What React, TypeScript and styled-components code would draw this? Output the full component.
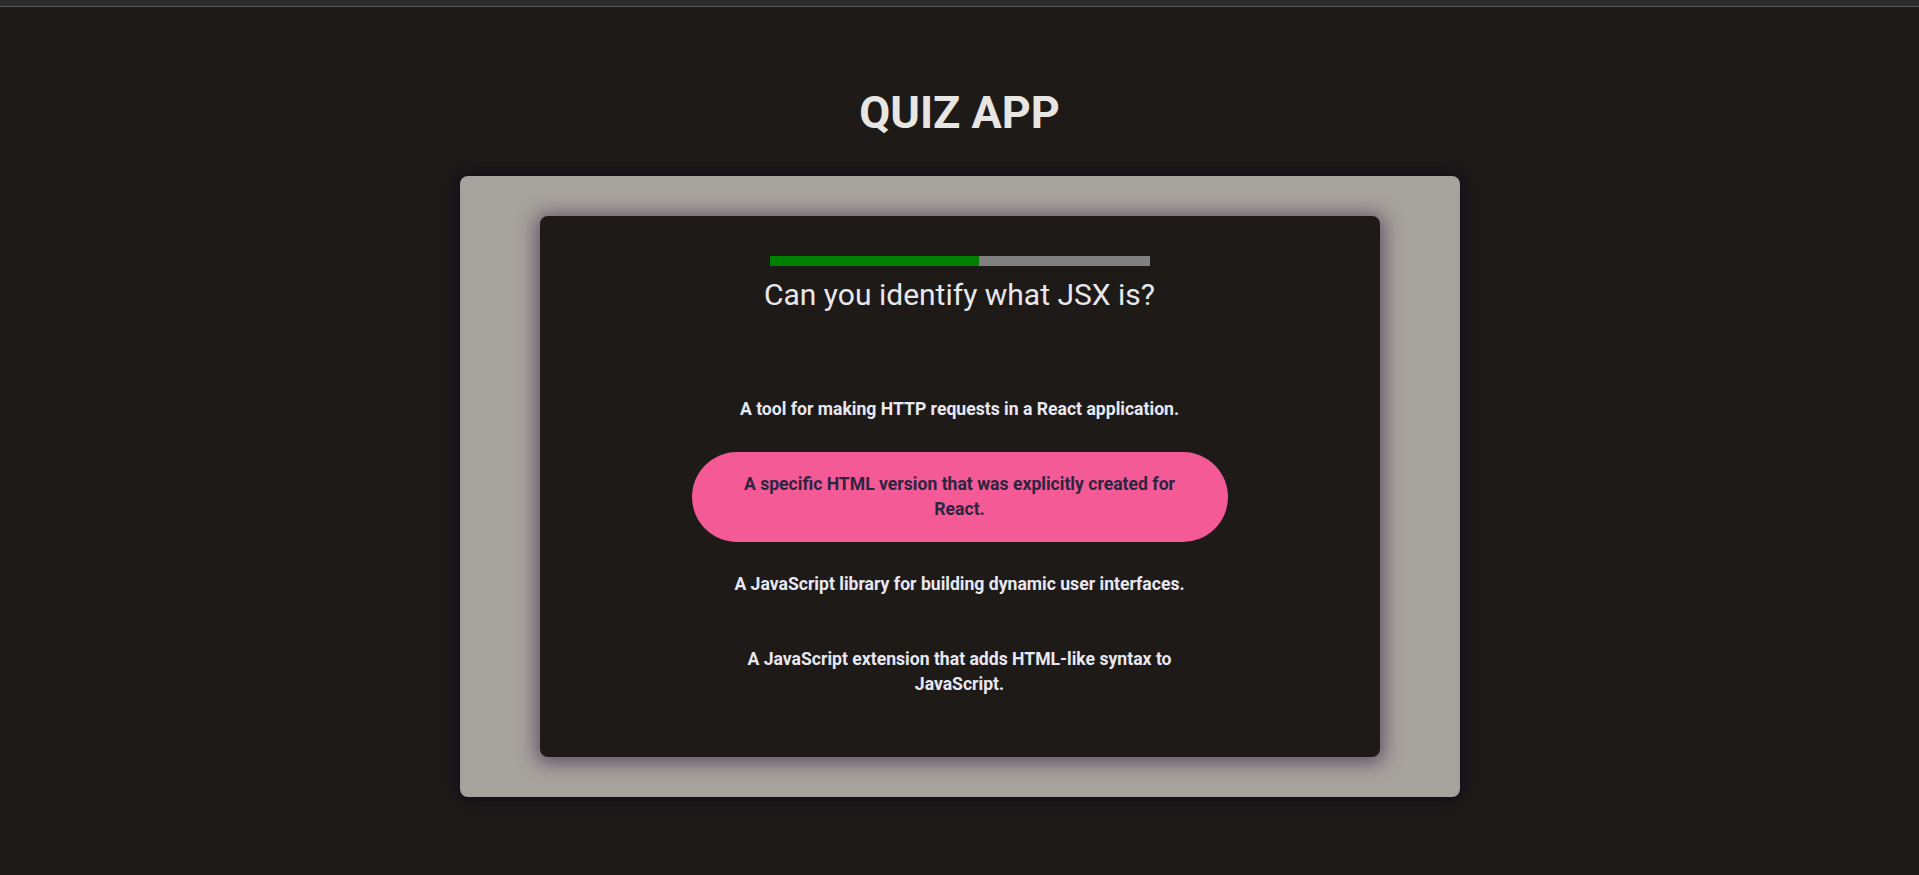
import React from "react";
import styled, { createGlobalStyle } from "styled-components";

const GlobalStyle = createGlobalStyle`
  html, body {
    margin: 0;
    padding: 0;
    background: #1d1a18;
    font-family: Roboto, "Noto Sans", "Liberation Sans", sans-serif;
  }
  * { box-sizing: border-box; }
`;

const TopStrip = styled.div`
  height: 7px;
  background: #2c2c2c;
  border-bottom: 1px solid #5a5a5a;
`;

const Page = styled.main`
  display: flex;
  flex-direction: column;
  align-items: center;
  min-height: 867px;
  padding-top: 79px;
`;

const Title = styled.h1`
  margin: 0 0 37px;
  font-size: 45px;
  font-weight: 700;
  line-height: 53px;
  color: #e8e6e3;
`;

const OuterCard = styled.section`
  width: 1000px;
  padding: 40px 80px;
  background: #a6a29c;
  border-radius: 8px;
  box-shadow: 0 0 14px 2px rgba(18, 12, 28, 0.95);
`;

const QuizCard = styled.div`
  display: flex;
  flex-direction: column;
  align-items: center;
  padding: 40px;
  background: #1d1a18;
  border-radius: 8px;
  box-shadow: 0 2px 18px 4px rgba(40, 22, 60, 0.55);
`;

const Progress = styled.div`
  width: 380px;
  height: 10px;
  background: #808080;
  display: flex;
`;

const ProgressFill = styled.div`
  height: 100%;
  background: #008000;
`;

const Question = styled.h2`
  margin: 11px 0 65px;
  font-size: 30px;
  font-weight: 400;
  line-height: 35px;
  color: #e8e8ec;
  text-align: center;
`;

const AnswerList = styled.ul`
  list-style: none;
  margin: 0;
  padding: 0;
  width: 536px;
  display: flex;
  flex-direction: column;
  gap: 10px;
`;

const AnswerItem = styled.li`
  width: 100%;
`;

const AnswerButton = styled.button<{ $selected?: boolean }>`
  display: block;
  width: 100%;
  padding: 20px 32px;
  border: none;
  border-radius: 45px;
  font-family: Roboto, "Noto Sans", "Liberation Sans", sans-serif;
  font-size: 17.6px;
  font-weight: 700;
  line-height: 25px;
  text-align: center;
  cursor: pointer;
  background: ${(p) => (p.$selected ? "#f45a96" : "transparent")};
  color: ${(p) => (p.$selected ? "#2c2540" : "#e8e8f2")};
`;

const answers = [
  "A tool for making HTTP requests in a React application.",
  "A specific HTML version that was explicitly created for React.",
  "A JavaScript library for building dynamic user interfaces.",
  "A JavaScript extension that adds HTML-like syntax to JavaScript.",
];

export default function App() {
  const progress = 55;
  const selected = 1;
  return (
    <>
      <GlobalStyle />
      <TopStrip />
      <Page>
        <Title>QUIZ APP</Title>
        <OuterCard>
          <QuizCard>
            <Progress>
              <ProgressFill style={{ width: `${progress}%` }} />
            </Progress>
            <Question>Can you identify what JSX is?</Question>
            <AnswerList>
              {answers.map((a, i) => (
                <AnswerItem key={a}>
                  <AnswerButton $selected={i === selected}>{a}</AnswerButton>
                </AnswerItem>
              ))}
            </AnswerList>
          </QuizCard>
        </OuterCard>
      </Page>
    </>
  );
}
